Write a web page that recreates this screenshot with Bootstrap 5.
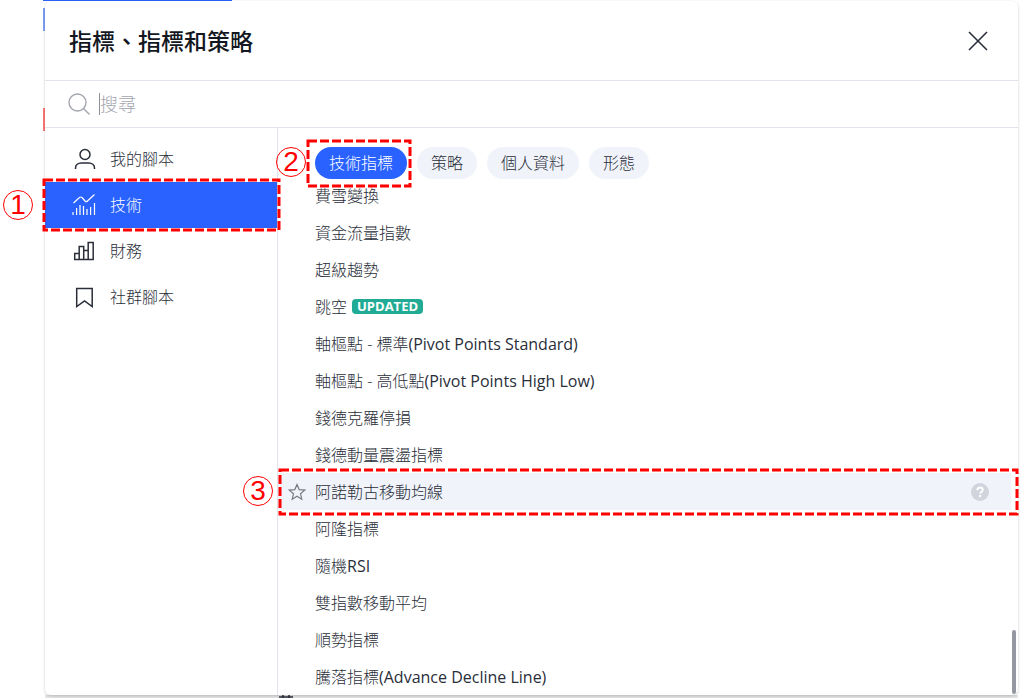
<!DOCTYPE html>
<html lang="zh-Hant">
<head>
<meta charset="utf-8">
<meta name="viewport" content="width=device-width, initial-scale=1">
<title>指標、指標和策略</title>
<link href="https://cdn.jsdelivr.net/npm/bootstrap@5.3.0/dist/css/bootstrap.min.css" rel="stylesheet">
<style>
  body { font-family: "Open Sans", "Noto Sans CJK TC", sans-serif; font-size: 16px; line-height: 24px; font-weight: 300; color: #2a2e39; background: #fff; }
  .stage { min-height: 100vh; padding: 1px 6px 0 45px; }
  .chart-tab { top: 0; left: 43px; width: 189px; height: 1px; background: #2962ff; }
  .chart-edge { left: 43px; width: 2px; }
  .edge-blue { top: 8px; height: 23px; background: #7da0fa; }
  .edge-red { top: 108px; height: 23px; background: #f77; }
  .dialog-box { border-radius: 6px; box-shadow: 0 1px 3px rgba(0,0,0,.2); background: #fff; }
  .dialog-head { height: 80px; padding: 0 29px 0 24px; border-bottom: 1px solid #e0e3eb; }
  .dialog-head h1 { font-size: 23px; line-height: 32px; font-weight: 500; color: #131722; }
  .search-bar { height: 47px; padding: 0 23px; border-bottom: 1px solid #e0e3eb; }
  .search-bar input { font-size: 18px; line-height: 24px; font-weight: 300; background: transparent; border: 0; border-left: 1px solid #8d9099; outline: 0; height: 22px; }
  .search-bar input::placeholder { color: #a3a6af; opacity: 1; }
  .side { width: 233px; padding-top: 8px; border-right: 1px solid #e0e3eb; }
  .side-item { height: 46px; padding: 0 27px; gap: 14px; color: #2a2e39; font-weight: 300; border: 0; background: transparent; text-align: left; }
  .side-item svg { width: 24px; height: 24px; flex: none; color: #2a2e39; }
  .side-item.chosen { background: #2962ff; color: #fff; }
  .side-item.chosen svg { color: #fff; }
  .chips { padding: 19px 37px 0; gap: 10px; }
  .chip { height: 32px; padding: 0 14px; border: 0; border-radius: 16px; background: #f0f3fa; color: #2a2e39; font-weight: 300; }
  .chip.chosen { background: #2962ff; color: #fff; }
  .rows { padding-right: 7px; margin-top: -2px; }
  .indicator { height: 37px; padding: 0 22px 0 37px; }
  .indicator.hovered { background: #f0f3fa; padding-left: 10px; }
  .latin { font-weight: 500; }
  .star-btn { width: 18px; height: 18px; margin-right: 9px; color: #787b86; }
  .updated { margin-left: 5px; padding: 0 5px; height: 15px; line-height: 15px; border-radius: 4px; background: #22ab94; color: #fff; font-size: 13px; font-weight: 700; }
  .thumb { right: 2px; bottom: 1px; width: 4px; height: 64px; border-radius: 2px; background: #9598a1; }
  .frame { overflow: visible; pointer-events: none; z-index: 2; }
  .frame rect { width: 100%; height: 100%; fill: none; stroke: #f00; stroke-width: 3; stroke-dasharray: 9 3; }
  .frame-side { left: -1px; top: -2px; width: 235px; height: 50px; }
  .frame-chip { left: -7px; top: -6px; width: calc(100% + 10px); height: 45px; }
  .frame-row { left: 2px; top: -3px; width: calc(100% + 4px); height: 44px; }
  .step { width: 30px; height: 30px; line-height: 28px; border: 1px solid #f00; border-radius: 50%; color: #f00; font-family: "Liberation Sans", sans-serif; font-size: 28px; font-weight: 400; text-align: center; z-index: 3; }
  .step-1 { left: -42px; top: 8px; }
  .step-2 { left: -39px; top: 0; }
  .step-3 { left: -35px; top: 3px; }
  .under { height: 3px; padding-left: 234px; background: #e4e4e6; }
</style>
</head>
<body>
<div class="stage d-flex flex-column position-relative overflow-hidden">
  <div class="chart-tab position-absolute"></div>
  <div class="chart-edge edge-blue position-absolute"></div>
  <div class="chart-edge edge-red position-absolute"></div>

  <section class="dialog-box d-flex flex-column flex-grow-1 position-relative">
    <header class="dialog-head d-flex align-items-center justify-content-between">
      <h1 class="m-0">指標、指標和策略</h1>
      <button type="button" class="btn p-0 border-0 d-flex" aria-label="關閉">
        <svg width="22" height="22" viewBox="0 0 22 22" fill="none" stroke="#2a2e39" stroke-width="1.600"><path d="M2 2l18 18M20 2L2 20"/></svg>
      </button>
    </header>

    <div class="search-bar d-flex align-items-center gap-2">
      <label for="q" class="d-flex"><svg width="23" height="22" viewBox="0 0 23 22" fill="none" stroke="#a3a6af" stroke-width="1.4"><circle cx="9.500" cy="9.500" r="8.500"/><path d="M15.500 15.500l6 6"/></svg></label>
      <input id="q" type="text" class="flex-grow-1 p-0" placeholder="搜尋">
    </div>

    <div class="d-flex flex-grow-1">
      <nav class="side d-flex flex-column flex-shrink-0">
        <button type="button" class="side-item d-flex align-items-center">
          <svg viewBox="0 0 24 24" fill="none" stroke="currentColor" stroke-width="1.500"><circle cx="13" cy="7.500" r="5"/><path d="M3.500 22v-1c0-3 2.500-5 6-5h7c3.500 0 6 2 6 5v1"/></svg>
          我的腳本</button>
        <div class="position-relative d-flex flex-column">
          <button type="button" class="side-item chosen d-flex align-items-center">
            <svg viewBox="0 0 24 24" fill="none" stroke="currentColor" stroke-width="1.200"><path d="M1.500 10l6-5.500c1-.8 1.500-.8 2.500 0l3 3.500c1 1 1.500 1 2.500 0l7-6.500M1 22v-3M4.600 22v-7M8 22V12M11.500 22v-9M15 22v-6M18.600 22v-8M22.500 22V10"/></svg>
            技術</button>
          <svg class="frame frame-side position-absolute" aria-hidden="true"><rect/></svg>
          <span class="step step-1 position-absolute">1</span>
        </div>
        <button type="button" class="side-item d-flex align-items-center">
          <svg viewBox="0 0 24 24" fill="none" stroke="currentColor" stroke-width="1.500"><path d="M2.700 20.500v-6h4.500v6zM7.200 20.500v-13h4.500v13zM11.700 20.500v-9h4.500v9zM16.200 20.500v-17h5v17z"/></svg>
          財務</button>
        <button type="button" class="side-item d-flex align-items-center">
          <svg viewBox="0 0 24 24" fill="none" stroke="currentColor" stroke-width="1.500"><path d="M4.700 3.500h15.500v18l-7.700-5.500-7.800 5.500z"/></svg>
          社群腳本</button>
      </nav>

      <main class="flex-grow-1">
        <div class="chips d-flex">
          <div class="position-relative">
            <button type="button" class="chip chosen d-block">技術指標</button>
            <svg class="frame frame-chip position-absolute" aria-hidden="true"><rect/></svg>
            <span class="step step-2 position-absolute">2</span>
          </div>
          <button type="button" class="chip">策略</button>
          <button type="button" class="chip">個人資料</button>
          <button type="button" class="chip">形態</button>
        </div>
        <ul class="rows list-unstyled mb-0">
          <li class="indicator d-flex align-items-center">費雪變換</li>
          <li class="indicator d-flex align-items-center">資金流量指數</li>
          <li class="indicator d-flex align-items-center">超級趨勢</li>
          <li class="indicator d-flex align-items-center">跳空<span class="updated">UPDATED</span></li>
          <li class="indicator d-flex align-items-center">軸樞點 - 標準<span class="latin">(Pivot Points Standard)</span></li>
          <li class="indicator d-flex align-items-center">軸樞點 - 高低點<span class="latin">(Pivot Points High Low)</span></li>
          <li class="indicator d-flex align-items-center">錢德克羅停損</li>
          <li class="indicator d-flex align-items-center">錢德動量震盪指標</li>
          <li class="indicator hovered d-flex align-items-center position-relative">
            <button type="button" class="btn star-btn p-0 border-0 d-flex" aria-label="加入收藏">
              <svg width="18" height="18" viewBox="0 0 18 18" fill="none" stroke="currentColor" stroke-width="1.200"><path d="M9 1.500l2.200 5.100 5.500.5-4.200 3.700 1.300 5.400L9 13.300l-4.800 2.900 1.300-5.400L1.300 7.100l5.500-.5z"/></svg>
            </button>
            阿諾勒古移動均線
            <button type="button" class="btn p-0 border-0 d-flex ms-auto" aria-label="說明">
              <svg width="18" height="18" viewBox="0 0 18 18"><circle cx="9" cy="9" r="9" fill="#d1d4dc"/><path d="M6.300 7.200c0-1.700 1.200-2.700 2.800-2.700s2.700 1 2.700 2.400c0 1.900-2.500 1.900-2.500 3.800" fill="none" stroke="#fff" stroke-width="1.800"/><circle cx="9.200" cy="13" r="1.200" fill="#fff"/></svg>
            </button>
            <svg class="frame frame-row position-absolute" aria-hidden="true"><rect/></svg>
            <span class="step step-3 position-absolute">3</span>
          </li>
          <li class="indicator d-flex align-items-center">阿隆指標</li>
          <li class="indicator d-flex align-items-center">隨機<span class="latin">RSI</span></li>
          <li class="indicator d-flex align-items-center">雙指數移動平均</li>
          <li class="indicator d-flex align-items-center">順勢指標</li>
          <li class="indicator d-flex align-items-center">騰落指標<span class="latin">(Advance Decline Line)</span></li>
        </ul>
      </main>
    </div>
    <div class="thumb position-absolute"></div>
  </section>
  <div class="under d-flex" aria-hidden="true">
    <svg width="14" height="3" viewBox="0 0 14 3" stroke="#2a2e39" stroke-width="1.500"><path d="M0 2h14M4 0v3M10 0v3"/></svg>
  </div>
</div>
<script src="https://cdn.jsdelivr.net/npm/bootstrap@5.3.0/dist/js/bootstrap.bundle.min.js"></script>
</body>
</html>
